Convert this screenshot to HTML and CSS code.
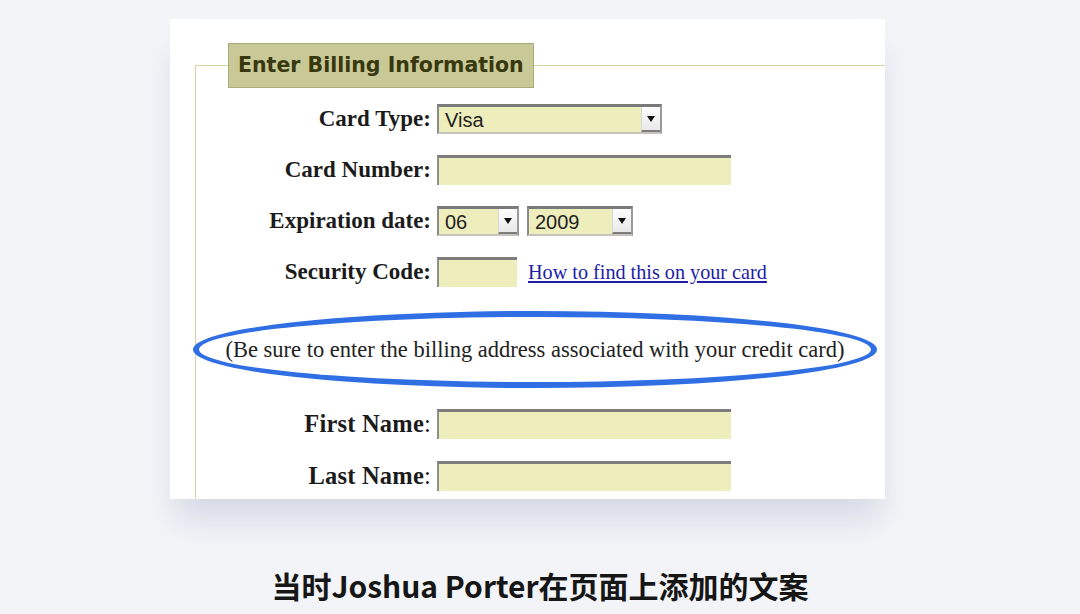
FILE: index.html
```html
<!DOCTYPE html>
<html lang="zh-CN">
<head>
    <meta charset="UTF-8">
    <meta name="viewport" content="width=device-width, initial-scale=1.0">
    <title>Billing copy</title>
    <link rel="stylesheet" href="styles.css">
</head>
<body>
    <div class="page">
        <div class="card">
            <fieldset class="billing">
                <legend>Enter Billing Information</legend>

                <div class="rows">
                    <label class="label">Card Type:</label>
                    <div class="select wide">
                        <span class="value">Visa</span>
                        <span class="arrow"></span>
                    </div>

                    <label class="label">Card Number:</label>
                    <div class="input long"></div>

                    <label class="label">Expiration date:</label>
                    <div class="pair">
                        <div class="select month">
                            <span class="value">06</span>
                            <span class="arrow"></span>
                        </div>
                        <div class="select year">
                            <span class="value">2009</span>
                            <span class="arrow"></span>
                        </div>
                    </div>

                    <label class="label">Security Code:</label>
                    <div class="pair">
                        <div class="input short"></div>
                        <a class="help" href="#">How to find this on your card</a>
                    </div>
                </div>

                <!-- the hand-drawn ring around the note -->
                <div class="note">(Be sure to enter the billing address associated with your credit card)</div>

                <div class="rows names">
                    <label class="label condensed"><b>First Name</b>:</label>
                    <div class="input long"></div>

                    <label class="label condensed"><b>Last Name</b>:</label>
                    <div class="input long"></div>
                </div>
            </fieldset>
        </div>

        <p class="caption">当时Joshua Porter在页面上添加的文案</p>
    </div>
</body>
</html>
```

FILE: styles.css
```css
body {
    margin: 0;
    background-color: #f3f4f8;
    font-family: "Liberation Serif", serif;
    color: #1b1b1b;
}

.page {
    padding-top: 19px;
}

.card {
    width: 715px;
    height: 480px;
    margin-left: 170px;
    background-color: #fff;
    overflow: hidden;
    box-shadow: 0 26px 30px -6px rgba(110, 125, 165, 0.22);
}

.billing {
    width: 760px;
    margin: 24px 0 0 25px;
    padding: 0 0 60px;
    border: 1px solid #d2d5a2;
}

.billing legend {
    margin-left: 32px;
    padding: 0 9px;
    height: 43px;
    line-height: 43px;
    background-color: #c9c997;
    border: 1px solid #aaaa7c;
    font-family: "DejaVu Sans", sans-serif;
    font-weight: bold;
    font-size: 20.5px;
    color: #38380f;
}

.rows {
    display: grid;
    grid-template-columns: 235px auto;
    column-gap: 6px;
    row-gap: 21px;
    align-items: center;
    padding-top: 16px;
}

.names {
    padding-top: 0;
    row-gap: 22px;
}

.label {
    text-align: right;
    font-weight: bold;
    font-size: 23px;
}

.label.condensed {
    font-weight: normal;
    font-size: 24.5px;
    letter-spacing: 0.2px;
}

.pair {
    display: flex;
    align-items: center;
    gap: 8px;
}

.input,
.select {
    box-sizing: border-box;
    height: 30px;
    background-color: #eeeebd;
}

.input {
    border-top: 3px solid #7d7d7d;
    border-left: 2px solid #8e8e8e;
}

.long {
    width: 294px;
}

.short {
    width: 80px;
}

.select {
    display: flex;
    align-items: center;
    border-top: 3px solid #7a7a7a;
    border-left: 2px solid #8a8a8a;
    border-right: 2px solid #9a9a9a;
    border-bottom: 2px solid #c4c4bc;
    font-family: "Liberation Sans", sans-serif;
    font-size: 20px;
    color: #222;
}

.wide {
    width: 225px;
}

.month {
    width: 82px;
}

.year {
    width: 106px;
}

.value {
    flex: 1;
    padding-left: 6px;
    line-height: 24px;
}

.arrow {
    position: relative;
    width: 19px;
    height: 100%;
    box-sizing: border-box;
    background: linear-gradient(#fdfdfd, #e9e9e9);
    border-left: 1px solid #d8d8d8;
    border-bottom: 2px solid #7c7c7c;
}

.arrow::after {
    content: "";
    position: absolute;
    left: 5px;
    top: 9px;
    border-left: 4px solid transparent;
    border-right: 4px solid transparent;
    border-top: 6px solid #111;
}

.help {
    margin-left: 3px;
    font-size: 20.2px;
    color: #1d1da6;
}

.note {
    box-sizing: border-box;
    width: 684px;
    height: 77px;
    margin: 24px 0 21px -3px;
    border: 6px solid #2f6fe3;
    border-radius: 50%;
    display: flex;
    align-items: center;
    justify-content: center;
    font-size: 22.5px;
    color: #222;
}

.caption {
    margin: 66px 0 0;
    text-align: center;
    font-family: "Noto Sans CJK SC", sans-serif;
    font-weight: bold;
    font-size: 30px;
    line-height: 40px;
    color: #161616;
}
```
